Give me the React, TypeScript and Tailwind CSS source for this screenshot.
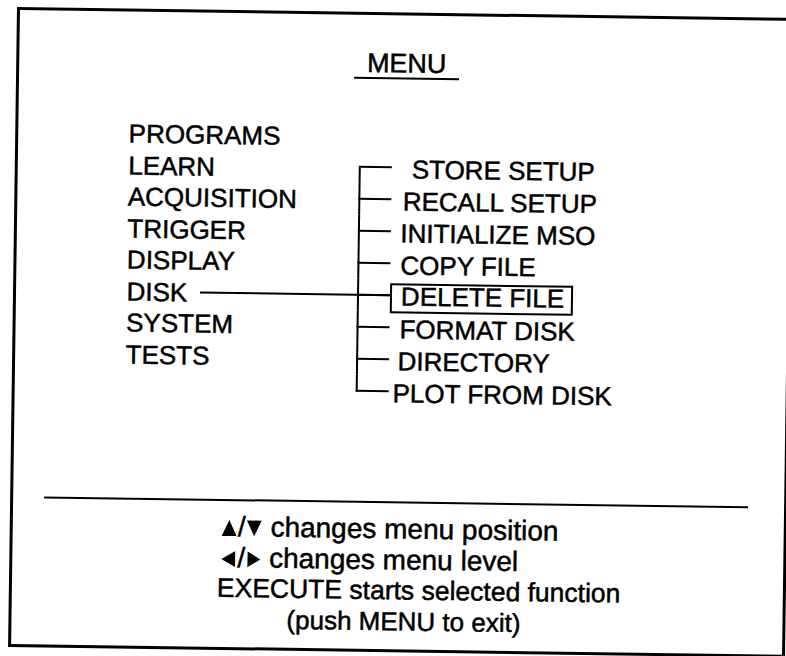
import React from "react";

const leftItems = ["PROGRAMS", "LEARN", "ACQUISITION", "TRIGGER", "DISPLAY", "DISK", "SYSTEM", "TESTS"];

type R = { t: string; gap: string; first?: boolean; last?: boolean; box?: boolean };
const rightItems: R[] = [
  { t: "STORE SETUP", gap: "ml-[20px]", first: true },
  { t: "RECALL SETUP", gap: "ml-[11.5px]" },
  { t: "INITIALIZE MSO", gap: "ml-[9.5px]" },
  { t: "COPY FILE", gap: "ml-[10px]" },
  { t: "DELETE FILE", gap: "", box: true },
  { t: "FORMAT DISK", gap: "ml-[10px]" },
  { t: "DIRECTORY", gap: "ml-[8.5px]" },
  { t: "PLOT FROM DISK", gap: "ml-[4px]", last: true },
];

function Connector({ first, last }: { first?: boolean; last?: boolean }) {
  return (
    <div className="flex h-[32px] w-[33px] shrink-0 flex-col">
      <div className={`h-[17px] border-b-2 border-black ${first ? "" : "border-l-2"}`} />
      <div className={`flex-1 border-black ${last ? "" : "border-l-2"}`} />
    </div>
  );
}

function Up() {
  return (
    <svg className="inline-block align-baseline" width="15" height="16" viewBox="0 0 15 16">
      <path d="M7.5 0 L15 16 L0 16 Z" fill="#000" />
    </svg>
  );
}
function Down() {
  return (
    <svg className="inline-block align-baseline" width="15" height="16" viewBox="0 0 15 16">
      <path d="M0 0 H15 L7.5 16 Z" fill="#000" />
    </svg>
  );
}
function Left() {
  return (
    <svg className="inline-block align-baseline" width="14" height="16" viewBox="0 0 14 16">
      <path d="M0 8 L14 0 V16 Z" fill="#000" />
    </svg>
  );
}
function Right() {
  return (
    <svg className="inline-block align-baseline" width="13" height="16" viewBox="0 0 13 16">
      <path d="M0 0 L13 8 L0 16 Z" fill="#000" />
    </svg>
  );
}

export default function App() {
  return (
    <div className="h-[656px] w-[786px] overflow-hidden bg-white pl-[17px] pt-[7px] font-['Liberation_Sans',Arial,sans-serif] text-black">
      <div className="flex h-[640px] w-[777px] shrink-0 origin-top-left rotate-[0.8deg] flex-col border-[3px] border-black [-webkit-text-stroke:0.5px_#000]">
        {/* Title */}
        <div className="flex flex-col items-center pl-[4px] pt-[33px]">
          <div className="text-[27px] leading-[30px]">MENU</div>
          <div className="mt-[-1px] h-[2px] w-[105px] bg-black" />
        </div>

        {/* Menu tree */}
        <div className="mt-[43px] flex items-start pl-[110.5px] text-[26px]">
          <div className="flex w-[230.5px] shrink-0 flex-col">
            {leftItems.map((t) =>
              t === "DISK" ? (
                <div key={t} className="flex items-start leading-[31.5px]">
                  <span>DISK</span>
                  <div className="ml-[13px] mt-[14px] h-[2px] w-[190px] shrink-0 bg-black" />
                </div>
              ) : (
                <div key={t} className="leading-[31.5px]">
                  {t}
                </div>
              )
            )}
          </div>
          <div className="mt-[28.8px] flex flex-col">
            {rightItems.map((r) => (
              <div key={r.t} className="flex h-[32px] items-start">
                <Connector first={r.first} last={r.last} />
                {r.box ? (
                  <div className="mt-[4px] h-[30px] w-[183px] shrink-0 border-2 border-black pl-[9px] leading-[22px] whitespace-nowrap">
                    {r.t}
                  </div>
                ) : (
                  <div className={`${r.gap} whitespace-nowrap pt-[2px] leading-[32px]`}>{r.t}</div>
                )}
              </div>
            ))}
          </div>
        </div>

        {/* Divider */}
        <div className="ml-[31px] mt-[94px] h-[2px] w-[704px] bg-black" />

        {/* Help text */}
        <div className="mt-[10px] flex flex-col">
          <div className="flex items-baseline pl-[209px] text-[28px] leading-[31px]">
            <Up />
            <span className="mx-[1px]">/</span>
            <Down />
            <span className="ml-[9px]">changes menu position</span>
          </div>
          <div className="flex items-baseline pl-[209px] text-[28px] leading-[31px]">
            <Left />
            <span className="mx-[2px]">/</span>
            <Right />
            <span className="ml-[9px]">changes menu level</span>
          </div>
          <div className="pl-[205px] text-[26.5px] leading-[31px]">EXECUTE starts selected function</div>
          <div className="pl-[275px] text-[26px] leading-[31px]">(push MENU to exit)</div>
        </div>
      </div>
    </div>
  );
}
